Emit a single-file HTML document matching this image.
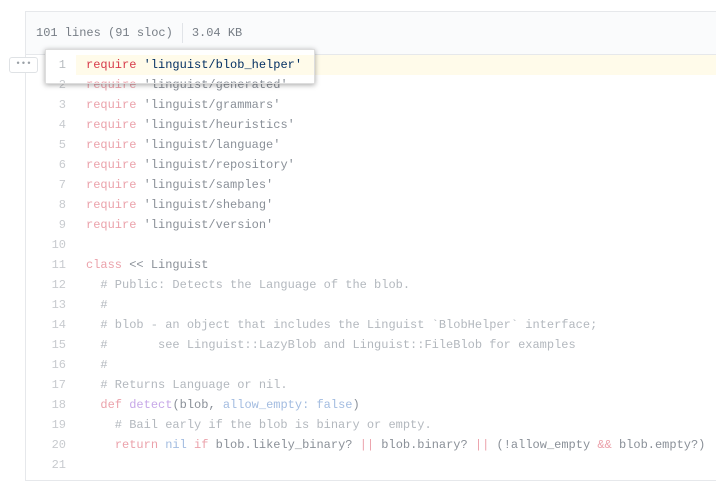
<!DOCTYPE html>
<html><head><meta charset="utf-8"><style>
*{margin:0;padding:0;box-sizing:border-box}
body{width:716px;height:464px;overflow:hidden;background:#fff;font-family:"Liberation Mono",monospace;position:relative}
.box{position:absolute;left:25px;top:11px;width:720px;height:470px;border:1px solid #e6e8eb;border-right:none}
.hdr{height:43px;background:#fafbfc;border-bottom:1px solid #e6e8eb;font-size:12px;color:#777e86;padding-left:10px;line-height:42px}
.hdr .sep{display:inline-block;width:1px;height:20px;background:#e1e4e8;vertical-align:middle;margin:0 9px 0 9px}
.code{position:absolute;left:25px;top:55px;width:700px}
.row{height:20px;line-height:20px;font-size:12px;white-space:pre;position:relative}
.n{position:absolute;left:0;width:41px;text-align:right;color:#c8cbcf}
.t{position:absolute;left:61px;color:#8a9098}
.k{color:#eba2ab}.s{color:#8a9098}.c{color:#b3b8be}.f{color:#c7a8e8}.b{color:#a3bce0}
.hl{position:absolute;left:50px;top:0;width:700px;height:20px;background:#fffbea}
.pop{position:absolute;left:45px;top:49px;width:270px;height:35px;background:#fff;box-shadow:0 1px 5px rgba(0,0,0,.35);border:1px solid #ddd;overflow:hidden}
.pop .row{position:absolute;left:0;width:268px}
.dots{position:absolute;left:9px;top:57px;width:29px;height:16px;border:1px solid #dfe2e5;border-radius:3px;background:#fff;color:#9aa0a6;font-size:9px;line-height:13px;text-align:center;letter-spacing:0px}
</style></head><body>
<div class="box"><div class="hdr">101 lines (91 sloc)<span class="sep"></span>3.04 KB</div></div>
<div class="code">
<div class="row"><span class="hl"></span><span class="n">1</span></div>
<div class="row"><span class="n">2</span><span class="t"><span class="k">require</span> 'linguist/generated'</span></div>
<div class="row"><span class="n">3</span><span class="t"><span class="k">require</span> 'linguist/grammars'</span></div>
<div class="row"><span class="n">4</span><span class="t"><span class="k">require</span> 'linguist/heuristics'</span></div>
<div class="row"><span class="n">5</span><span class="t"><span class="k">require</span> 'linguist/language'</span></div>
<div class="row"><span class="n">6</span><span class="t"><span class="k">require</span> 'linguist/repository'</span></div>
<div class="row"><span class="n">7</span><span class="t"><span class="k">require</span> 'linguist/samples'</span></div>
<div class="row"><span class="n">8</span><span class="t"><span class="k">require</span> 'linguist/shebang'</span></div>
<div class="row"><span class="n">9</span><span class="t"><span class="k">require</span> 'linguist/version'</span></div>
<div class="row"><span class="n">10</span></div>
<div class="row"><span class="n">11</span><span class="t"><span class="k">class</span> &lt;&lt; Linguist</span></div>
<div class="row"><span class="n">12</span><span class="t"><span class="c">  # Public: Detects the Language of the blob.</span></span></div>
<div class="row"><span class="n">13</span><span class="t"><span class="c">  #</span></span></div>
<div class="row"><span class="n">14</span><span class="t"><span class="c">  # blob - an object that includes the Linguist `BlobHelper` interface;</span></span></div>
<div class="row"><span class="n">15</span><span class="t"><span class="c">  #       see Linguist::LazyBlob and Linguist::FileBlob for examples</span></span></div>
<div class="row"><span class="n">16</span><span class="t"><span class="c">  #</span></span></div>
<div class="row"><span class="n">17</span><span class="t"><span class="c">  # Returns Language or nil.</span></span></div>
<div class="row"><span class="n">18</span><span class="t">  <span class="k">def</span> <span class="f">detect</span>(blob, <span class="b">allow_empty:</span> <span class="b">false</span>)</span></div>
<div class="row"><span class="n">19</span><span class="t"><span class="c">    # Bail early if the blob is binary or empty.</span></span></div>
<div class="row"><span class="n">20</span><span class="t">    <span class="k">return</span> <span class="b">nil</span> <span class="k">if</span> blob.likely_binary? <span class="k">||</span> blob.binary? <span class="k">||</span> (!allow_empty <span class="k">&amp;&amp;</span> blob.empty?)</span></div>
<div class="row"><span class="n">21</span></div>
</div>
<div class="pop">
<div class="row" style="top:5px"><span class="hl" style="left:30px;width:238px"></span><span class="n" style="left:0;width:20px;color:#b8bcc0">1</span><span class="t" style="left:40px;color:#032f62"><span style="color:#d73a49">require</span> 'linguist/blob_helper'</span></div>
<div class="row" style="top:25px"><span class="n" style="width:20px">2</span><span class="t" style="left:40px"><span class="k">require</span> 'linguist/generated'</span></div>
</div>
<div class="dots">•••</div>
</body></html>
